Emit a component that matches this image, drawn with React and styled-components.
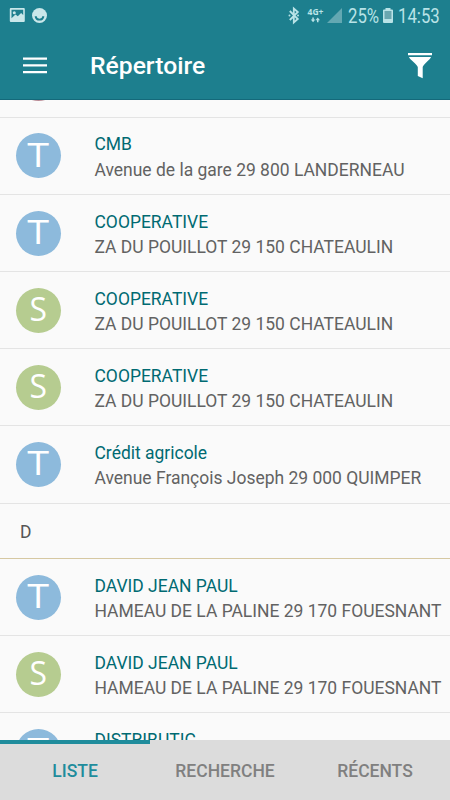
import React from "react";
import styled, { createGlobalStyle } from "styled-components";

const contacts = [
  { type: "R" },
  {
    type: "T",
    name: "CMB",
    address: "Avenue de la gare 29 800 LANDERNEAU",
  },
  {
    type: "T",
    name: "COOPERATIVE",
    address: "ZA DU POUILLOT 29 150 CHATEAULIN",
  },
  {
    type: "S",
    name: "COOPERATIVE",
    address: "ZA DU POUILLOT 29 150 CHATEAULIN",
  },
  {
    type: "S",
    name: "COOPERATIVE",
    address: "ZA DU POUILLOT 29 150 CHATEAULIN",
  },
  {
    type: "T",
    name: "Crédit agricole",
    address: "Avenue François Joseph 29 000 QUIMPER",
  },
  { section: "D" },
  {
    type: "T",
    name: "DAVID JEAN PAUL",
    address: "HAMEAU DE LA PALINE 29 170 FOUESNANT",
  },
  {
    type: "S",
    name: "DAVID JEAN PAUL",
    address: "HAMEAU DE LA PALINE 29 170 FOUESNANT",
  },
  { type: "T", name: "DISTRIBUTIC" },
];

const tabs = ["LISTE", "RECHERCHE", "RÉCENTS"];

const colors = { T: "#8dbadc", S: "#b6cc90", R: "#b98a94" };

const StatusBar = () => {
  return (
    <StyledStatus>
      <svg width="48" height="32" viewBox="0 0 48 32">
        <path
          fillRule="evenodd"
          fill="#c9e7ea"
          d="M10.8 8h13a1 1 0 0 1 1 1v12a1 1 0 0 1-1 1h-13a1 1 0 0 1-1-1V9a1 1 0 0 1 1-1zM11.5 9.8v8.4l4-3.7 2.3 1.8 3.3-3.3 2.1 2V9.8z"
        />
        <circle cx="14.3" cy="12.8" r="1.5" fill="#c9e7ea" />
        <circle cx="39.5" cy="15.5" r="7.5" fill="#c9e7ea" />
        <path
          d="M35.5 16.2c1 4.6 7 4.6 8 0"
          fill="none"
          stroke="#1d7f8e"
          strokeWidth="1.9"
        />
      </svg>
      <StatusRight>
        <svg width="55.5" height="32" viewBox="0 0 55.5 32">
          <path
            d="M1.8 11l8 8-4 3.5V8.5l4 3.5-8 8"
            fill="none"
            stroke="#b9e3e7"
            strokeWidth="1.8"
          />
          <circle cx="1.5" cy="15.5" r="1" fill="#b9e3e7" />
          <circle cx="10" cy="15.5" r="1" fill="#b9e3e7" />
          <text
            x="19.5"
            y="15"
            fill="#b9e3e7"
            fontFamily="Noto Sans, sans-serif"
            fontSize="8.5"
            fontWeight="700"
            textLength="16"
            lengthAdjust="spacingAndGlyphs"
          >
            4G+
          </text>
          <path
            d="M24.3 17.5h1.5V19.5h1.5l-2.25 2.8-2.25-2.8h1.5zM29 22.3h1.5V20.3H32l-2.25-2.8-2.25 2.8H29z"
            fill="#b9e3e7"
          />
          <path d="M54 8v15H39z" fill="#63a8b2" />
        </svg>
        <Condensed $width={30}>25%</Condensed>
        <Battery width="10" height="15" viewBox="0 0 10 15">
          <path
            d="M2.5 0h5v1.5H9a1 1 0 0 1 1 1V14a1 1 0 0 1-1 1H1a1 1 0 0 1-1-1V2.5a1 1 0 0 1 1-1h1.5z"
            fill="#b9e3e7"
          />
          <path d="M1.5 3h7v8h-7z" fill="#6aa7b0" />
        </Battery>
        <Condensed $width={41}>14:53</Condensed>
      </StatusRight>
    </StyledStatus>
  );
};

const Toolbar = () => {
  return (
    <StyledToolbar>
      <MenuButton type="button" aria-label="Menu">
        <svg width="24" height="17" viewBox="0 0 24 17">
          <path
            d="M0 .4h24v2.3H0zM0 7.2h24v2.3H0zM0 14h24v2.3H0z"
            fill="#fff"
          />
        </svg>
      </MenuButton>
      <Title>Répertoire</Title>
      <IconButton type="button" aria-label="Filtrer">
        <svg width="24" height="26" viewBox="0 0 24 26">
          <path
            d="M0 0h24v2.2H0zM1 4h22c-.3 2-8.3 8-8.3 10.2V25.3L9.8 23V14.2C9.800 12 1.300 6 1 4z"
            fill="#fff"
          />
        </svg>
      </IconButton>
    </StyledToolbar>
  );
};

const App = () => {
  return (
    <>
      <GlobalStyle />
      <Screen>
        <Header>
          <StatusBar />
          <Toolbar />
        </Header>
        <ListWindow>
          <List>
            {contacts.map((item, index) => {
              if (item.section) {
                return <Section key={index}>{item.section}</Section>;
              }
              return (
                <Row key={index}>
                  <Avatar $type={item.type}>
                    {item.name && (
                      <Letter $wide={item.type === "T"}>{item.type}</Letter>
                    )}
                  </Avatar>
                  <Details>
                    <Name>{item.name}</Name>
                    <Address>{item.address}</Address>
                  </Details>
                </Row>
              );
            })}
          </List>
        </ListWindow>
        <Tabs>
          {tabs.map((tab, index) => (
            <Tab type="button" key={tab} $active={index === 0}>
              {tab}
            </Tab>
          ))}
        </Tabs>
      </Screen>
    </>
  );
};

const GlobalStyle = createGlobalStyle`
  * {
    box-sizing: border-box;
  }
  body {
    margin: 0;
    font-family: Roboto, sans-serif;
    background: #fafafa;
  }
  svg {
    display: block;
  }
`;
const Screen = styled.div`
  width: 450px;
  height: 800px;
  display: flex;
  flex-direction: column;
  overflow: hidden;
`;
const Header = styled.header`
  height: 100px;
  flex-shrink: 0;
  background: #1d7f8e;
  border-bottom: 1px solid #14697a;
`;
const StyledStatus = styled.div`
  height: 32px;
  display: flex;
  justify-content: space-between;
`;
const StatusRight = styled.div`
  display: flex;
  align-items: center;
  gap: 5px;
  padding-right: 11px;
`;
const Battery = styled.svg`
  margin-bottom: 1px;
`;
const Condensed = styled.span`
  width: ${(props) => props.$width}px;
  padding-top: 1px;
  font-size: 19.5px;
  line-height: 31px;
  white-space: nowrap;
  color: #b9e3e7;
  transform: scaleX(0.86);
  transform-origin: left;
`;
const StyledToolbar = styled.div`
  height: 67px;
  display: flex;
  align-items: center;
  padding: 0 18px 0 23px;
`;
const MenuButton = styled.button`
  padding: 0 0 1px;
  border: none;
  background: none;
  cursor: pointer;
`;
const IconButton = styled.button`
  margin-left: auto;
  padding: 0;
  border: none;
  background: none;
  cursor: pointer;
`;
const Title = styled.h1`
  margin: 0 0 0 43px;
  padding-top: 1px;
  font-size: 24.7px;
  line-height: 36px;
  font-weight: 500;
  color: #fff;
`;
const ListWindow = styled.main`
  flex: 1;
  min-height: 0;
  overflow: hidden;
`;
const List = styled.div`
  margin-top: -59.3px;
`;
const Row = styled.div`
  height: 77.15px;
  display: flex;
  align-items: center;
  padding-left: 16px;
  border-bottom: 1px solid #e4e4e4;
`;
const Avatar = styled.div`
  width: 45px;
  height: 45px;
  flex-shrink: 0;
  display: flex;
  align-items: center;
  justify-content: center;
  border-radius: 50%;
  background: ${(props) => colors[props.$type]};
`;
const Letter = styled.span`
  padding-bottom: 3px;
  font-family: "Open Sans", sans-serif;
  font-size: 33.5px;
  line-height: 43px;
  color: #fff;
  transform: scaleX(${(props) => (props.$wide ? 1.18 : 0.95)});
`;
const Details = styled.div`
  padding-top: 4px;
  margin-left: 33.5px;
  font-size: 17.48px;
  line-height: 25.5px;
  white-space: nowrap;
`;
const Name = styled.div`
  height: 25.5px;
  color: #006a72;
`;
const Address = styled.div`
  height: 25.5px;
  color: #626262;
`;
const Section = styled.div`
  height: 55.5px;
  padding-left: 20px;
  font-size: 17.48px;
  line-height: 56px;
  color: #555;
  border-bottom: 1px solid #d6c8a2;
`;
const Tabs = styled.nav`
  height: 60px;
  flex-shrink: 0;
  display: flex;
  background: #dcdcdc;
`;
const Tab = styled.button`
  flex: 1;
  padding: 0 0 3px;
  border: none;
  border-top: 4px solid ${(props) => (props.$active ? "#1f8c9c" : "transparent")};
  background: none;
  font-family: inherit;
  font-size: 17.5px;
  font-weight: 500;
  color: ${(props) => (props.$active ? "#1f8c9c" : "#808080")};
  cursor: pointer;
`;
export default App;
